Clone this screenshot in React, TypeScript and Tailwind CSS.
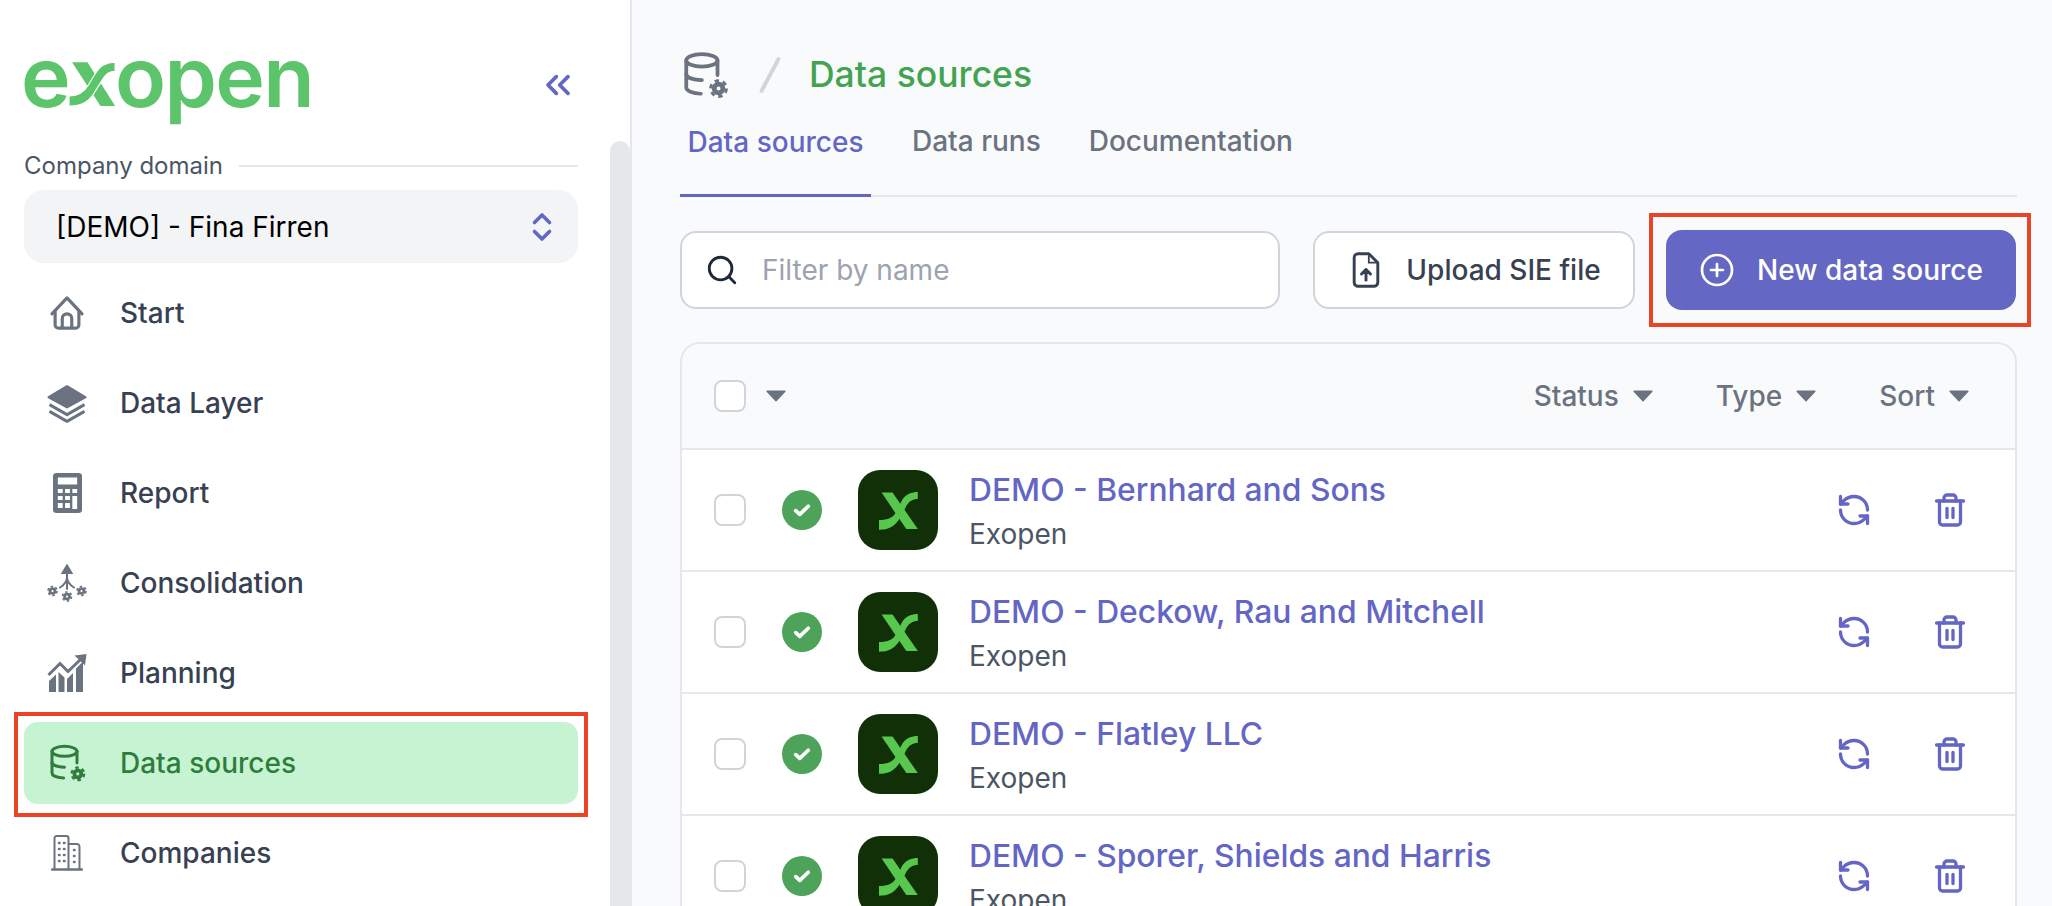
import { ReactNode } from 'react'
import { ChevronsLeft, ChevronsUpDown, Search, RefreshCcw, Trash2, CirclePlus } from 'lucide-react'

function Gear({ cx, cy, r }: { cx: number; cy: number; r: number }) {
  return (
    <g fill="none" stroke="currentColor" strokeLinecap="butt">
      <circle cx={cx} cy={cy} r={r * 0.55} strokeWidth={r * 0.6} />
      <circle
        cx={cx}
        cy={cy}
        r={r}
        strokeWidth={r * 0.36}
        strokeDasharray={`${r * 0.55} ${r * 0.497}`}
      />
    </g>
  )
}

function DbGearIcon({ className }: { className: string }) {
  return (
    <svg viewBox="0 0 24 24" className={className} fill="none" stroke="currentColor" strokeWidth="1.8" strokeLinecap="round">
      <ellipse cx="10.500" cy="5" rx="7.500" ry="3" />
      <path d="M18 5v7" />
      <path d="M3 5v13c0 1.600 3 2.800 7 3" />
      <path d="M3 11.500c0 1.600 3 2.800 7.500 3" />
      <Gear cx={18.500} cy={18.500} r={3.800} />
    </svg>
  )
}

const HomeIcon = (
  <svg viewBox="0 0 24 24" className="h-[38px] w-[38px]" fill="none" stroke="currentColor" strokeWidth="2" strokeLinecap="round" strokeLinejoin="round">
    <path d="M2.500 12.500 12 2.500l9.500 10" />
    <path d="M4.500 11v8.500a2 2 0 0 0 2 2h11a2 2 0 0 0 2-2V11" />
    <path d="M9 21v-5.500a3 3 0 0 1 6 0V21" />
  </svg>
)

const LayersIcon = (
  <svg viewBox="0 0 24 24" className="h-[40px] w-[40px]" fill="currentColor" stroke="currentColor" strokeWidth="1.400" strokeLinejoin="round">
    <path d="M12 2 23 8.600 12 14.600 1 8.600Z" />
    <path d="M1.500 13 12 19l10.500-6" fill="none" strokeWidth="1.800" />
    <path d="M1.500 17 12 23l10.500-6" fill="none" strokeWidth="1.800" />
  </svg>
)

const CalcIcon = (
  <svg viewBox="0 0 24 40" preserveAspectRatio="none" className="h-[40px] w-[29px]" fill="currentColor">
    <path
      fillRule="evenodd"
      d="M3 0h18a3 3 0 0 1 3 3v34a3 3 0 0 1-3 3H3a3 3 0 0 1-3-3V3a3 3 0 0 1 3-3Zm1 4.500v7h16v-7ZM4 16v4h4v-4Zm6 0v4h4v-4Zm6 0v4h4v-4ZM4 23v4h4v-4Zm6 0v4h4v-4Zm6 0v13h4V23ZM4 30v5h4v-5Zm6 0v5h4v-5Z"
    />
  </svg>
)

const ConsolidationIcon = (
  <svg viewBox="0 0 40 38" className="h-[38px] w-[40px]" fill="none" stroke="currentColor" strokeWidth="2" strokeLinecap="round">
    <path d="M20 1.500 15.500 9h9Z" fill="currentColor" />
    <path d="M20 8v17" />
    <path d="M20 13c0 5-3 8-7 10.500" />
    <path d="M20 13c0 5 3 8 7 10.500" />
    <Gear cx={5.500} cy={27} r={4.500} />
    <Gear cx={20} cy={32.500} r={4.500} />
    <Gear cx={34.500} cy={27} r={4.500} />
  </svg>
)

const PlanningIcon = (
  <svg viewBox="0 0 40 38" className="h-[38px] w-[40px]" fill="currentColor">
    <path d="M1.500 21 13 9.500l8 8L33 6" fill="none" stroke="currentColor" strokeWidth="3" />
    <path d="M27.500 1.500 39.500 0 38 11.500Z" />
    <path d="M2 27l7-6.500V38H2ZM11.500 18l6 5.500V38h-6ZM20 25l6-6v19h-6ZM29 14.500l7-7V38h-7Z" />
  </svg>
)

const BuildingIcon = (
  <svg viewBox="0 0 32 36" className="h-[36px] w-[32px]" fill="none" stroke="currentColor" strokeWidth="2" strokeLinecap="round" strokeLinejoin="round">
    <path d="M1 34.500h30" strokeWidth="2.400" />
    <path d="M3.500 34V3a2 2 0 0 1 2-2h10a2 2 0 0 1 2 2v31" />
    <path d="M18 9h8a2.500 2.500 0 0 1 2.500 2.500V34" />
    <path d="M8 8h.5M13 8h.5M8 14h.5M13 14h.5M8 20h.5M13 20h.5M8 26h.5M13 26h.5M23 15h.5M23 21h.5M23 27h.5" strokeWidth="2.600" />
  </svg>
)

const UploadFileIcon = (
  <svg viewBox="0 0 24 32" className="h-[36px] w-[28px]" fill="none" stroke="currentColor" strokeWidth="2.600" strokeLinecap="round" strokeLinejoin="round">
    <path d="M14.500 1.500H5a3.500 3.500 0 0 0-3.500 3.500v22A3.500 3.500 0 0 0 5 30.500h14a3.500 3.500 0 0 0 3.500-3.500V9.500Z" />
    <path d="M14.500 2v7.500h7.500" strokeWidth="1.600" />
    <path d="M12 25v-9" />
    <path d="m8 19.500 4-4 4 4" fill="currentColor" />
  </svg>
)

function Caret({ className = '' }: { className?: string }) {
  return (
    <svg viewBox="0 0 18 11" className={`h-[12px] w-[20px] ${className}`} fill="#6b7280">
      <path d="M0.800 0.500h16.400a.6.6 0 0 1 .45 1L9.500 10.300a.7.7 0 0 1-1 0L.35 1.500a.6.6 0 0 1 .45-1Z" />
    </svg>
  )
}

function Checkbox() {
  return <span className="block h-[32px] w-[32px] shrink-0 rounded-[8px] border-2 border-[#d1d5db] bg-white" />
}

function AppLogo() {
  return (
    <div className="h-[80px] w-[80px] shrink-0 rounded-[22px] bg-[#123008]">
      <svg viewBox="0 0 80 80" className="h-full w-full" fill="#57c84d">
        <path d="M23.600 22.600H34.500L59.800 59H48.300Z" />
        <path d="M21 50C30 50 35.500 48 38.900 40.500L43.900 30.400C47.300 24 54 22 59.800 22V29C54.500 29 50.700 31 47.300 38L42.900 46.300C37.200 57 30.400 59.800 21 59.800Z" />
      </svg>
    </div>
  )
}

function NavItem({ icon, label }: { icon: ReactNode; label: string }) {
  return (
    <a className="flex h-[90px] items-center text-[#6b7280]">
      <span className="flex w-[86px] shrink-0 items-center justify-center">{icon}</span>
      <span className="pl-[10px] text-[28px] font-medium text-[#374151]">{label}</span>
    </a>
  )
}

const sources = [
  'DEMO - Bernhard and Sons',
  'DEMO - Deckow, Rau and Mitchell',
  'DEMO - Flatley LLC',
  'DEMO - Sporer, Shields and Harris',
]

export default function App() {
  return (
    <div className="flex h-screen overflow-hidden bg-[#f9fafb] font-['Inter',sans-serif]">
      {/* Sidebar */}
      <aside className="flex h-full w-[632px] shrink-0 border-r-[2px] border-[#e5e7eb] bg-white">
        <div className="flex min-w-0 flex-1 flex-col pl-[24px] pr-[32px]">
          <div className="flex h-[148px] shrink-0 items-start justify-between pt-[35px]">
            <div className="-ml-[3px] text-[84px] font-semibold leading-none tracking-[-0.02em] text-[#5cc46a]">
              e
              <span className="relative inline-block text-transparent">
                x
                <svg viewBox="0 0 60 58" className="absolute left-0 top-[26px] h-[47px] w-full" fill="#5cc46a">
                  <path d="M4 0H24L60 57H41Z" />
                  <path stroke="white" strokeWidth="1.500" d="M0 44C12 44 19 40 25 30L34 15C40 5 48 0 60 0V12C52 12 48 15 44 22L34 38C26 52 16 57 0 57Z" />
                </svg>
              </span>
              open
            </div>
            <ChevronsLeft className="mt-[30px] h-[40px] w-[40px] text-[#6466c6]" strokeWidth={2.200} />
          </div>

          <div className="flex items-center gap-[16px]">
            <span className="text-[24px] text-[#4b5563]">Company domain</span>
            <span className="h-[2px] flex-1 bg-[#e5e7eb]" />
          </div>
          <button className="mt-[6px] flex h-[73px] shrink-0 items-center justify-between rounded-[20px] bg-[#f3f4f6] pl-[32px] pr-[18px] text-[28px] text-black">
            [DEMO] - Fina Firren
            <ChevronsUpDown className="h-[36px] w-[36px] text-[#6466c6]" strokeWidth={2.400} />
          </button>

          <nav className="mt-[5px] flex flex-col">
            <NavItem icon={HomeIcon} label="Start" />
            <NavItem icon={LayersIcon} label="Data Layer" />
            <NavItem icon={CalcIcon} label="Report" />
            <NavItem icon={ConsolidationIcon} label="Consolidation" />
            <NavItem icon={PlanningIcon} label="Planning" />
            <div className="-mx-[10px] -mb-[9px] -mt-[6px] border-[4px] border-[#ea4325] pb-[9px] pl-[6px] pr-[6px] pt-[6px]">
              <a className="flex h-[82px] items-center rounded-[14px] bg-[#c6f4d2] text-[#2f7d3b]">
                <span className="flex w-[86px] shrink-0 items-center justify-center">
                  <DbGearIcon className="h-[40px] w-[40px]" />
                </span>
                <span className="pl-[10px] text-[28px] font-medium">Data sources</span>
              </a>
            </div>
            <NavItem icon={BuildingIcon} label="Companies" />
          </nav>
        </div>
        <div className="w-[20px] shrink-0 pt-[141px]">
          <div className="h-full rounded-t-[10px] bg-[#e5e7eb]" />
        </div>
      </aside>

      {/* Main */}
      <main className="min-w-0 flex-1 pl-[48px] pr-[35px]">
        <div className="flex h-[100px] items-center pt-[50px] text-[#6b7280]">
          <DbGearIcon className="h-[50px] w-[50px]" />
          <span className="ml-[38px] h-[40px] w-[4px] rotate-[28deg] rounded-full bg-[#d1d5db]" />
          <span className="ml-[37px] text-[35.500px] font-medium text-[#43a351]">Data sources</span>
        </div>

        <div className="flex h-[97px] border-b-[2px] border-[#e5e7eb] text-[28px] font-medium text-[#6b7280]">
          <a className="-mb-[2px] flex w-[191px] items-center justify-center border-b-[3px] border-[#6466c6] pb-[10px] text-[#6466c6]">Data sources</a>
          <a className="ml-[41px] flex items-center pb-[13px]">Data runs</a>
          <a className="ml-[48px] flex items-center pb-[13px]">Documentation</a>
        </div>

        <div className="mt-[33px] flex items-center">
          <div className="flex h-[78px] w-[600px] items-center rounded-[16px] border-2 border-[#d1d5db] bg-white pl-[23px]">
            <Search className="h-[34px] w-[34px] text-[#1f2937]" strokeWidth={2} />
            <span className="ml-[23px] text-[28px] text-[#9ca3af]">Filter by name</span>
          </div>
          <button className="ml-[33px] flex h-[78px] w-[322px] items-center justify-center gap-[26px] rounded-[16px] border-2 border-[#d1d5db] bg-white pl-[5px] text-[28px] font-medium text-[#374151]">
            {UploadFileIcon}
            Upload SIE file
          </button>
          <div className="-my-[17px] -mr-[15px] ml-[14px] border-[4px] border-[#ea4325] py-[13px] pl-[13px] pr-[11px]">
            <button className="flex h-[80px] w-[350px] items-center justify-center gap-[22px] rounded-[16px] bg-[#6567c4] text-[28px] font-medium text-white">
              <CirclePlus className="h-[36px] w-[36px]" strokeWidth={1.800} />
              New data source
            </button>
          </div>
        </div>

        <div className="mt-[32px] overflow-hidden rounded-t-[20px] border-2 border-b-0 border-[#e5e7eb]">
          <div className="flex h-[106px] items-center border-b-2 border-[#e5e7eb] pl-[32px] pr-[46px] text-[28px] font-medium text-[#6b7280]">
            <Checkbox />
            <Caret className="ml-[20px]" />
            <span className="ml-auto">Status</span>
            <Caret className="ml-[14px]" />
            <span className="ml-[63px]">Type</span>
            <Caret className="ml-[14px]" />
            <span className="ml-[63px]">Sort</span>
            <Caret className="ml-[14px]" />
          </div>
          {sources.map((name) => (
            <div key={name} className="flex h-[122px] items-center border-b-2 border-[#e5e7eb] bg-white pl-[32px] pr-[47px]">
              <Checkbox />
              <span className="ml-[36px] flex h-[40px] w-[40px] shrink-0 items-center justify-center rounded-full bg-[#4ea35a]">
                <svg viewBox="0 0 16 16" className="h-[20px] w-[20px]" fill="none" stroke="white" strokeWidth="3" strokeLinecap="round" strokeLinejoin="round">
                  <path d="m3 8.500 3.200 3L13 5" />
                </svg>
              </span>
              <span className="ml-[36px]"><AppLogo /></span>
              <div className="ml-[31px] flex flex-col gap-[6px] pt-[2px]">
                <a className="text-[31.800px] font-medium leading-[40px] text-[#6466c6]">{name}</a>
                <span className="text-[28px] leading-[36px] text-[#4b5563]">Exopen</span>
              </div>
              <RefreshCcw className="ml-auto h-[36px] w-[36px] text-[#6466c6]" strokeWidth={2.200} />
              <Trash2 className="ml-[60px] h-[36px] w-[36px] text-[#6466c6]" strokeWidth={2.200} />
            </div>
          ))}
        </div>
      </main>
    </div>
  )
}
